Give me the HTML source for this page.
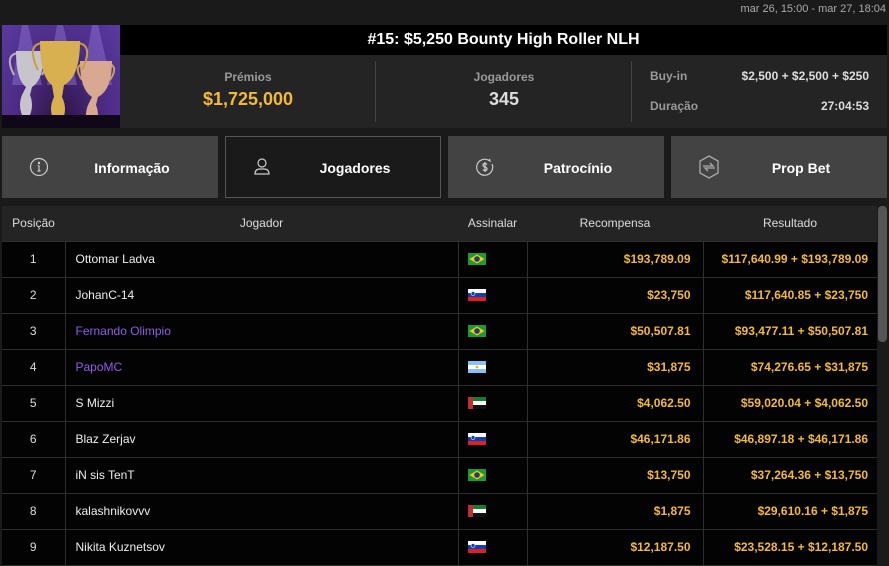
<!DOCTYPE html>
<html><head><meta charset="utf-8"><style>
*{margin:0;padding:0;box-sizing:border-box}
body{width:889px;height:562px;background:#1a1a1a;font-family:"Liberation Sans",Arial,sans-serif;color:#fff;position:relative;overflow:hidden}
.a{position:absolute}
.date{right:3px;top:3px;font-size:11px;color:#aaa}
.img{left:2px;top:25px;width:118px;height:103px;background:radial-gradient(ellipse at 50% 100%,#2a1240 0%,#4a2a80 50%,#5a3aa0 100%);overflow:hidden}
.title{left:120px;top:25px;width:767px;height:30px;background:#000;font-weight:bold;font-size:16px;text-align:center;line-height:30px}
.stats{left:120px;top:55px;width:767px;height:73px;background:#242424}
.lbl{font-size:12px;font-weight:bold;color:#999}
.tab{top:136px;width:216px;height:62px;background:#434343;font-weight:bold;font-size:14px;line-height:64px}
.tab span{position:absolute;left:0;right:0;text-align:center;padding-left:44px}
.tab svg{position:absolute;left:27px;top:21px}
table{position:absolute;left:2px;top:206px;width:875px;border-collapse:collapse;font-size:12px;table-layout:fixed}
th{background:#242424;height:35px;font-weight:normal;color:#ddd;font-size:12px}
td{height:36px;border:1px solid #2e2e2e;background:#030303;font-weight:bold;white-space:nowrap}
td.p{text-align:center;font-weight:normal;color:#ddd;border-left:none}
td.n{padding-left:10px;font-weight:normal;color:#eee}
td.n.v{color:#8e5de6}
td.f{padding-left:9px}
td.r{text-align:right;color:#f2b93b;padding-right:12px}
td.r2{text-align:right;color:#f2b93b;padding-right:9px;border-right:none}
.fl{display:block;width:18px;height:12px}
</style></head><body>
<div class="a date">mar 26, 15:00 - mar 27, 18:04</div>
<div class="a img">
<svg width="118" height="103" viewBox="0 0 118 103">
<g fill="#8a70d0" opacity=".5"><polygon points="20,0 26,0 40,60 10,60"/><polygon points="55,0 61,0 75,60 45,60"/><polygon points="90,0 96,0 110,60 80,60"/></g>
<g fill="none" stroke="#b8b0b8" stroke-width="2"><path d="M12 50 Q2 30 16 28"/><path d="M40 50 Q50 30 38 28"/></g>
<path d="M14 26 H42 Q42 55 30 62 L28 70 Q32 80 28 90 H20 Q16 80 20 70 L24 62 Q14 55 14 26Z" fill="#c8c4cc"/>
<g fill="none" stroke="#c0a060" stroke-width="2"><path d="M80 55 Q70 40 84 38"/><path d="M108 55 Q118 40 104 38"/></g>
<path d="M78 36 H110 Q110 65 96 72 L94 80 Q98 90 94 100 H86 Q82 90 86 80 L90 72 Q78 65 78 36Z" fill="#d8a890"/>
<g fill="none" stroke="#c8a040" stroke-width="2"><path d="M36 45 Q24 20 40 18"/><path d="M80 45 Q92 20 76 18"/></g>
<path d="M38 16 H78 Q78 52 62 60 L60 72 Q66 84 60 96 H52 Q46 84 52 72 L50 60 Q38 52 38 16Z" fill="#d8b050"/>
<rect x="0" y="90" width="118" height="13" fill="#100818"/>
</svg></div>
<div class="a title">#15: $5,250 Bounty High Roller NLH</div>
<div class="a stats">
<div class="a lbl" style="left:0;width:256px;top:15px;text-align:center">Prémios</div>
<div class="a" style="left:0;width:256px;top:34px;text-align:center;color:#f2b93b;font-weight:bold;font-size:18px">$1,725,000</div>
<div class="a" style="left:255px;top:6px;width:1px;height:61px;background:#444"></div>
<div class="a lbl" style="left:256px;width:256px;top:15px;text-align:center">Jogadores</div>
<div class="a" style="left:256px;width:256px;top:34px;text-align:center;color:#ddd;font-weight:bold;font-size:18px">345</div>
<div class="a" style="left:511px;top:6px;width:1px;height:61px;background:#444"></div>
<div class="a lbl" style="left:530px;top:14px">Buy-in</div>
<div class="a" style="right:18px;top:14px;font-size:12px;font-weight:bold;color:#ddd">$2,500 + $2,500 + $250</div>
<div class="a lbl" style="left:530px;top:44px">Duração</div>
<div class="a" style="right:18px;top:44px;font-size:12px;font-weight:bold;color:#ddd">27:04:53</div>
</div>
<div class="a tab" style="left:2px"><svg width="20" height="20" viewBox="0 0 20 20" fill="none" stroke="#ccc" stroke-width="1.2"><circle cx="10" cy="10" r="8.5"/><path d="M10 8.5V14M8.5 14H11.5M8.8 8.5H10"/><circle cx="10" cy="6" r=".6" fill="#ccc"/></svg><span>Informação</span></div>
<div class="a tab" style="left:225px;background:#1a1a1a;border:1px solid #555;line-height:62px"><svg width="20" height="20" viewBox="0 0 20 20" fill="none" stroke="#ccc" stroke-width="1.2" style="left:26px;top:20px"><circle cx="10" cy="6" r="4"/><path d="M3 17 Q3 12 8 12 H12 Q17 12 17 17 Z"/></svg><span>Jogadores</span></div>
<div class="a tab" style="left:448px"><svg width="20" height="20" viewBox="0 0 20 20" fill="none" stroke="#ccc" stroke-width="1.2"><path d="M14 3.5 A8 8 0 1 0 17 7"/><path d="M15 2 L14 3.5 L16 4.5"/><path d="M12 7.5 Q11 6.5 10 6.5 Q8 6.5 8 8 Q8 9.5 10 10 Q12 10.5 12 12 Q12 13.5 10 13.5 Q8.5 13.5 8 12.5M10 5V15"/></svg><span>Patrocínio</span></div>
<div class="a tab" style="left:671px"><svg width="22" height="24" viewBox="0 0 22 24" fill="none" stroke="#aaa" stroke-width="1.3" style="top:19px"><path d="M11 1 L20 6 V18 L11 23 L2 18 V6 Z"/><path d="M5 11 H15 L12 8M17 13 H7 L10 16"/></svg><span>Prop Bet</span></div>
<table>
<colgroup><col style="width:63px"><col style="width:393px"><col style="width:69px"><col style="width:176px"><col style="width:174px"></colgroup>
<tr><th>Posição</th><th>Jogador</th><th>Assinalar</th><th>Recompensa</th><th>Resultado</th></tr>
<tr><td class="p">1</td><td class="n">Ottomar Ladva</td><td class="f"><svg class="fl" viewBox="0 0 18 12"><rect width="18" height="12" fill="#1a9a3a"/><path d="M9 1.5 L16.5 6 L9 10.5 L1.5 6Z" fill="#f5d000"/><circle cx="9" cy="6" r="2.8" fill="#1a3a8a"/></svg></td><td class="r">$193,789.09</td><td class="r2">$117,640.99 + $193,789.09</td></tr>
<tr><td class="p">2</td><td class="n">JohanC-14</td><td class="f"><svg class="fl" viewBox="0 0 18 12"><rect width="18" height="4" fill="#fff"/><rect y="4" width="18" height="4" fill="#1040b0"/><rect y="8" width="18" height="4" fill="#e02020"/><circle cx="5" cy="4.5" r="2" fill="#1040b0" stroke="#fff" stroke-width=".6"/></svg></td><td class="r">$23,750</td><td class="r2">$117,640.85 + $23,750</td></tr>
<tr><td class="p">3</td><td class="n v">Fernando Olimpio</td><td class="f"><svg class="fl" viewBox="0 0 18 12"><rect width="18" height="12" fill="#1a9a3a"/><path d="M9 1.5 L16.5 6 L9 10.5 L1.5 6Z" fill="#f5d000"/><circle cx="9" cy="6" r="2.8" fill="#1a3a8a"/></svg></td><td class="r">$50,507.81</td><td class="r2">$93,477.11 + $50,507.81</td></tr>
<tr><td class="p">4</td><td class="n v">PapoMC</td><td class="f"><svg class="fl" viewBox="0 0 18 12"><rect width="18" height="12" fill="#8ac0ee"/><rect y="4" width="18" height="4" fill="#fff"/><circle cx="9" cy="6" r="1.4" fill="#f0b020"/></svg></td><td class="r">$31,875</td><td class="r2">$74,276.65 + $31,875</td></tr>
<tr><td class="p">5</td><td class="n">S Mizzi</td><td class="f"><svg class="fl" viewBox="0 0 18 12"><rect width="18" height="4" fill="#1a7a30"/><rect y="4" width="18" height="4" fill="#fff"/><rect y="8" width="18" height="4" fill="#111"/><rect width="5" height="12" fill="#c03030"/></svg></td><td class="r">$4,062.50</td><td class="r2">$59,020.04 + $4,062.50</td></tr>
<tr><td class="p">6</td><td class="n">Blaz Zerjav</td><td class="f"><svg class="fl" viewBox="0 0 18 12"><rect width="18" height="4" fill="#fff"/><rect y="4" width="18" height="4" fill="#1040b0"/><rect y="8" width="18" height="4" fill="#e02020"/><circle cx="5" cy="4.5" r="2" fill="#1040b0" stroke="#fff" stroke-width=".6"/></svg></td><td class="r">$46,171.86</td><td class="r2">$46,897.18 + $46,171.86</td></tr>
<tr><td class="p">7</td><td class="n">iN sis TenT</td><td class="f"><svg class="fl" viewBox="0 0 18 12"><rect width="18" height="12" fill="#1a9a3a"/><path d="M9 1.5 L16.5 6 L9 10.5 L1.5 6Z" fill="#f5d000"/><circle cx="9" cy="6" r="2.8" fill="#1a3a8a"/></svg></td><td class="r">$13,750</td><td class="r2">$37,264.36 + $13,750</td></tr>
<tr><td class="p">8</td><td class="n">kalashnikovvv</td><td class="f"><svg class="fl" viewBox="0 0 18 12"><rect width="18" height="4" fill="#1a7a30"/><rect y="4" width="18" height="4" fill="#fff"/><rect y="8" width="18" height="4" fill="#111"/><rect width="5" height="12" fill="#c03030"/></svg></td><td class="r">$1,875</td><td class="r2">$29,610.16 + $1,875</td></tr>
<tr><td class="p">9</td><td class="n">Nikita Kuznetsov</td><td class="f"><svg class="fl" viewBox="0 0 18 12"><rect width="18" height="4" fill="#fff"/><rect y="4" width="18" height="4" fill="#1040b0"/><rect y="8" width="18" height="4" fill="#e02020"/><circle cx="5" cy="4.5" r="2" fill="#1040b0" stroke="#fff" stroke-width=".6"/></svg></td><td class="r">$12,187.50</td><td class="r2">$23,528.15 + $12,187.50</td></tr>
</table>
<div class="a" style="left:878px;top:206px;width:9px;height:136px;background:#555;border-radius:4px"></div>
</body></html>
